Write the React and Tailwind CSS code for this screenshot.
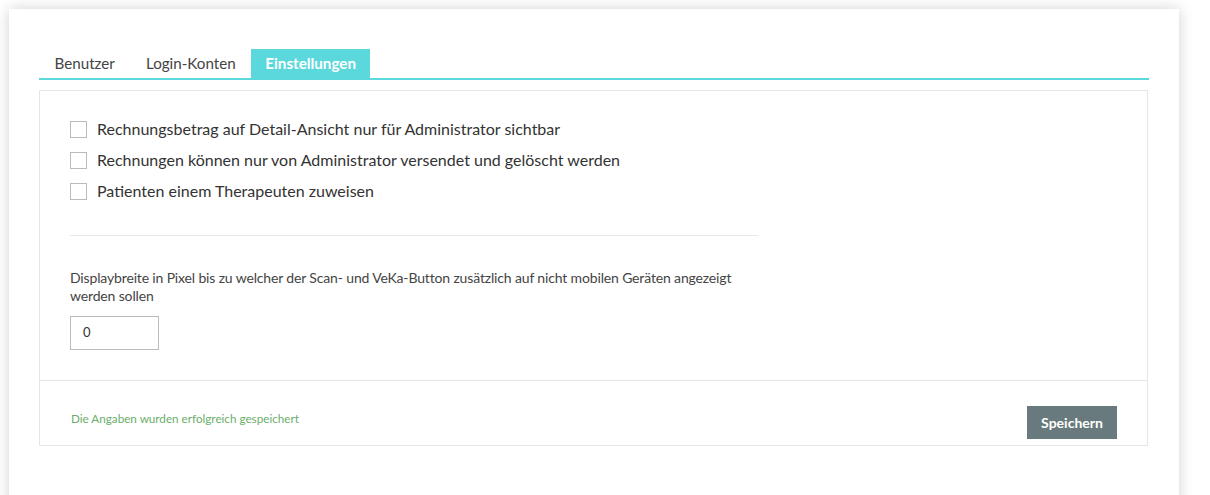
import React, { useState } from "react";

const tabs = ["Benutzer", "Login-Konten", "Einstellungen"];

const options = [
  "Rechnungsbetrag auf Detail-Ansicht nur für Administrator sichtbar",
  "Rechnungen können nur von Administrator versendet und gelöscht werden",
  "Patienten einem Therapeuten zuweisen",
];

const App = () => {
  const [active] = useState("Einstellungen");

  return (
    <div className="h-[495px] overflow-hidden bg-white pl-[9px] pt-[9px] font-['Lato',sans-serif] text-[#333]">
      <div className="w-[1170px] h-[520px] bg-white shadow-[0_0_14px_rgba(0,0,0,0.18)] px-[30px] pt-[40px]">
        {/* TABS */}
        <div className="flex border-b-2 border-[#5bd8dc]">
          {tabs.map((t) => (
            <div
              key={t}
              className={`h-[29px] flex items-center text-[15.2px] ${
                t === active
                  ? "px-[14px] bg-[#5bd8dc] text-white font-bold"
                  : "px-[15.5px] text-[#444]"
              }`}
            >
              {t}
            </div>
          ))}
        </div>

        {/* PANEL */}
        <div className="mt-[10px] mr-[1px] border border-[#e6e6e6]">
          <div className="px-[30px] pt-[29px] h-[289px]">
            <div className="flex flex-col gap-[14px]">
              {options.map((o) => (
                <label key={o} className="flex items-center gap-[10px] text-[16px] text-[#333] h-[17px]">
                  <span className="w-[17px] h-[17px] border border-[#bbb] bg-white shrink-0 mt-[2px]" />
                  {o}
                </label>
              ))}
            </div>

            <div className="mt-[36px] w-[688px] border-t border-[#e8e8e8]" />

            <p className="mt-[33px] w-[688px] text-[14px] leading-[18px] tracking-[-0.15px] text-[#444]">
              Displaybreite in Pixel bis zu welcher der Scan- und VeKa-Button zusätzlich auf nicht mobilen Geräten angezeigt werden sollen
            </p>
            <div className="mt-[11px] w-[89px] h-[34px] border border-[#bbb] flex items-center px-[12px] text-[13px] text-[#333]">
              0
            </div>
          </div>

          {/* FOOTER */}
          <div className="border-t border-[#e6e6e6] h-[65px] flex items-center justify-between pl-[31px] pr-[30px]">
            <span className="text-[11.7px] text-[#6aae6a] mt-[12px]">
              Die Angaben wurden erfolgreich gespeichert
            </span>
            <button className="mt-[19px] w-[90px] h-[33px] bg-[#687a7d] text-white text-[14px] font-bold">
              Speichern
            </button>
          </div>
        </div>
      </div>
    </div>
  );
};

export default App;
